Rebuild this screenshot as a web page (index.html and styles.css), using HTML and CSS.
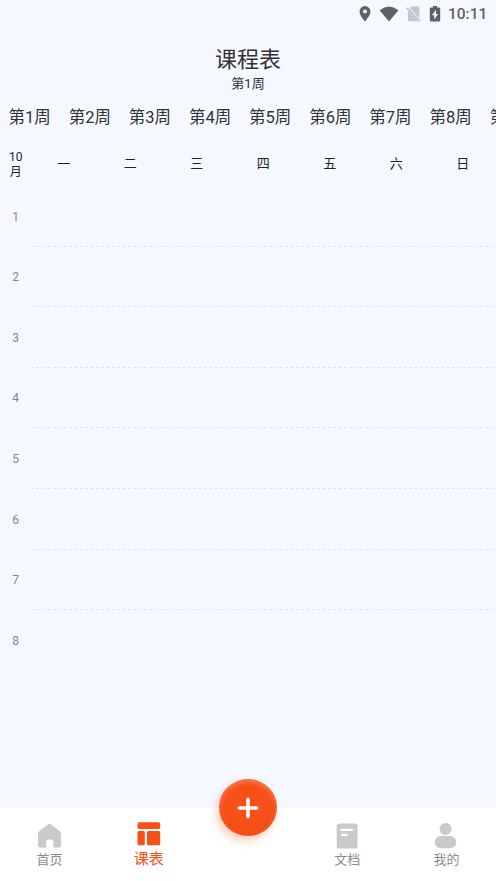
FILE: index.html
```html
<!DOCTYPE html>
<html lang="zh-CN">
<head>
<meta charset="utf-8">
<title>课程表</title>
<link rel="stylesheet" href="styles.css">
</head>
<body>
<div class="status">
  <svg class="pin" width="12" height="16" viewBox="0 0 12 16"><path fill="#5f6165" fill-rule="evenodd" d="M6 0a5.500 5.500 0 0 0-5.500 5.600C.5 9.700 6 15.500 6 15.500S11.500 9.700 11.500 5.600A5.500 5.500 0 0 0 6 0Zm0 3.600a2 2 0 1 1 0 4 2 2 0 0 1 0-4Z"/></svg>
  <svg class="wifi" width="20" height="16" viewBox="0 0 20 16"><path fill="#5f6165" d="M.6 4.200Q10-3 19.400 4.200L10 15.500Z"/></svg>
  <svg class="sim" width="15" height="16" viewBox="0 0 15 16"><path fill="#c3c6cb" d="M5.500.5H12a1.300 1.300 0 0 1 1.300 1.300v10.500L3.800 2.300ZM1.900 4.500 12.400 15.300H3.200a1.300 1.300 0 0 1-1.300-1.300Z"/><path d="m.7 1.700 13.400 13.500" stroke="#b5b8bd" stroke-width="1.300"/></svg>
  <svg class="battery" width="12" height="16" viewBox="0 0 12 16"><path fill="#5f6165" fill-rule="evenodd" d="M4 0h4v1.600h2.200a1 1 0 0 1 1 1v12a1 1 0 0 1-1 1H1.800a1 1 0 0 1-1-1v-12a1 1 0 0 1 1-1H4ZM7 3.800 2.900 9.300h2.300v4.200L9.200 7.900H7Z"/></svg>
  <span class="clock">10:11</span>
</div>
<header>
  <h1>课程表</h1>
  <p>第1周</p>
</header>
<nav class="weeks">
  <span>第1周</span><span>第2周</span><span>第3周</span><span>第4周</span><span>第5周</span><span>第6周</span><span>第7周</span><span>第8周</span><span>第9周</span>
</nav>
<div class="days">
  <div class="month">10<br>月</div>
  <span>一</span><span>二</span><span>三</span><span>四</span><span>五</span><span>六</span><span>日</span>
</div>
<main>
  <div class="row"><span>1</span><i></i></div>
  <div class="row"><span>2</span><i></i></div>
  <div class="row"><span>3</span><i></i></div>
  <div class="row"><span>4</span><i></i></div>
  <div class="row"><span>5</span><i></i></div>
  <div class="row"><span>6</span><i></i></div>
  <div class="row"><span>7</span><i></i></div>
  <div class="row"><span>8</span></div>
</main>
<footer>
  <div class="tab">
    <svg width="26" height="28" viewBox="0 0 26 28"><path fill="#cacaca" d="M10.800 2.500a2.700 2.700 0 0 1 3.400 0l8.600 6.800q1.200 1 1.200 2.500v11.600a2.200 2.200 0 0 1-2.200 2.200h-5.400v-5.800a2.200 2.200 0 0 0-2.200-2.200h-2.800a2.200 2.200 0 0 0-2.200 2.200v5.800H3.200A2.200 2.200 0 0 1 1 23.400V11.800q0-1.500 1.200-2.500Z"/></svg>
    <span>首页</span>
  </div>
  <div class="tab active">
    <svg width="26" height="28" viewBox="0 0 26 28"><g fill="#f74f18"><rect x="1.500" y="1.300" width="22.700" height="6.700" rx="1.500"/><rect x="1.500" y="10" width="7.300" height="14.300" rx="1.500"/><rect x="11" y="10" width="13.200" height="14.300" rx="1.500"/></g></svg>
    <span>课表</span>
  </div>
  <div class="tab add"><button aria-label="添加"><svg width="22" height="22" viewBox="0 0 22 22"><path d="M11 2.300v17.400M2.300 11h17.400" stroke="#fff" stroke-width="3.600" stroke-linecap="round"/></svg></button></div>
  <div class="tab">
    <svg width="26" height="28" viewBox="0 0 26 28"><rect x="2.700" y="1.400" width="20.800" height="25" rx="2.500" fill="#cacaca"/><path d="M7.200 7.800h11M8 12.900h4.500" stroke="#fff" stroke-width="2.200" stroke-linecap="round"/></svg>
    <span>文档</span>
  </div>
  <div class="tab">
    <svg width="26" height="28" viewBox="0 0 26 28"><g fill="#cacaca"><circle cx="12.500" cy="7.100" r="6"/><rect x="1.800" y="14" width="21.400" height="12.300" rx="6"/></g></svg>
    <span>我的</span>
  </div>
</footer>
</body>
</html>
```
FILE: styles.css
```css
* { box-sizing: border-box; }

body {
  margin: 0;
  width: 496px;
  height: 881px;
  overflow: hidden;
  display: flex;
  flex-direction: column;
  background: #f5f8ff;
  color: #303236;
  font-family: Roboto, "Noto Sans CJK SC", sans-serif;
}

svg { display: block; flex: none; }

.status {
  height: 27px;
  padding: 0 9px 0 0;
  display: flex;
  justify-content: flex-end;
  align-items: center;
  color: #5f6165;
}
.wifi { margin-left: 8px; }
.sim { margin-left: 7px; }
.battery { margin-left: 8px; }
.clock {
  width: 39px;
  margin-left: 7px;
  font-size: 15.500px;
  font-weight: 500;
  line-height: 28px;
  white-space: nowrap;
}

header {
  height: 70px;
  padding-top: 18px;
  text-align: center;
}
h1 {
  margin: 0;
  font-size: 22px;
  font-weight: 400;
  line-height: 30px;
}
header p {
  margin: 0;
  font-size: 13px;
  line-height: 17px;
}

.weeks {
  height: 40px;
  padding-left: 8.500px;
  display: flex;
  overflow: hidden;
}
.weeks span {
  flex: none;
  width: 60.150px;
  font-size: 16.500px;
  line-height: 42px;
  white-space: nowrap;
}

.days {
  height: 49px;
  display: flex;
  color: #202124;
  font-size: 13px;
  line-height: 53px;
  text-align: center;
}
.month {
  width: 30.500px;
  padding: 13px 0 0 1px;
  font-size: 12px;
  line-height: 14.500px;
}
.days span { flex: 1; }

main { flex: 1; }
.row {
  height: 60.600px;
  display: flex;
  align-items: flex-end;
}
.row span {
  width: 31px;
  color: #85868a;
  font-size: 12px;
  line-height: 59px;
  text-align: center;
}
.row i {
  flex: 1;
  height: 1px;
  background: repeating-linear-gradient(90deg, #dfe2e8 0 3px, transparent 3px 5.400px);
}

footer {
  height: 73px;
  display: flex;
  background: #fff;
}
.tab {
  flex: 1;
  padding-top: 14px;
  display: flex;
  flex-direction: column;
  align-items: center;
  color: #8c8c8c;
  font-size: 13px;
  line-height: 20px;
}
.active {
  padding-top: 13px;
  color: #f74f18;
  font-size: 15px;
}
.add { padding: 0; }
.add button {
  width: 58px;
  height: 57px;
  margin-top: -29px;
  padding: 0;
  display: flex;
  align-items: center;
  justify-content: center;
  border: 0;
  border-radius: 50%;
  background: #f74f18;
  box-shadow: -3px 5px 8px rgba(247, 79, 24, .27), inset 0 3px 5px rgba(255, 255, 255, .25);
}
```
